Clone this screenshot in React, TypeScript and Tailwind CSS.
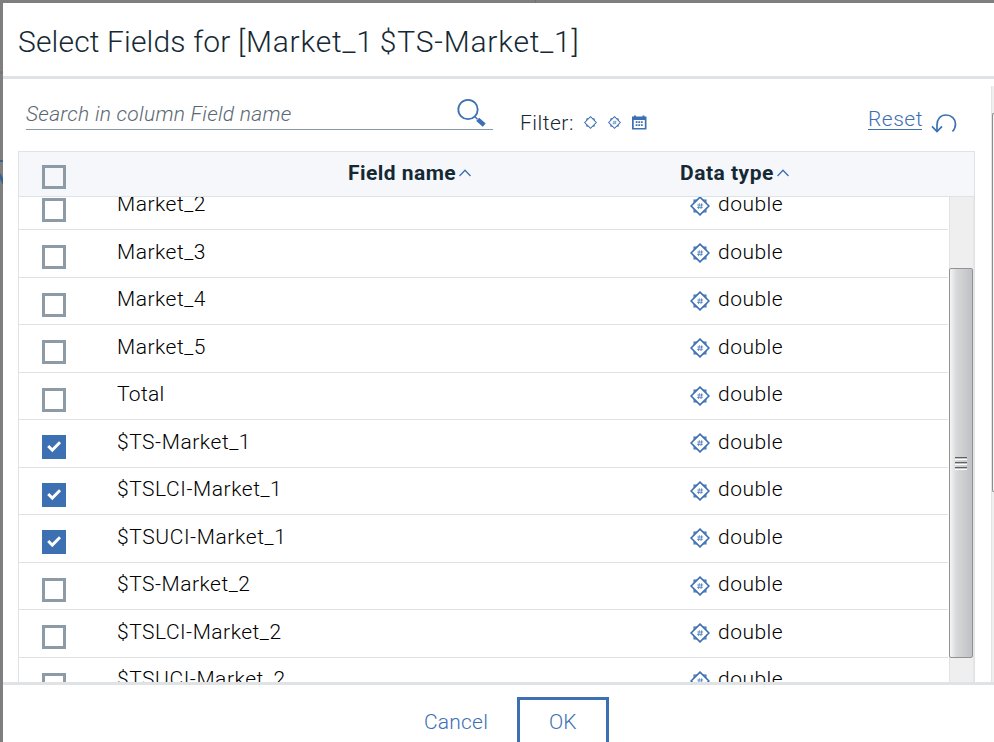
import React from "react";

type Row = { name: string; checked?: boolean; spacing: string };

const rows: Row[] = [
  { name: "Market_2", spacing: "tracking-[0.5px]" },
  { name: "Market_3", spacing: "tracking-[0.5px]" },
  { name: "Market_4", spacing: "tracking-[0.5px]" },
  { name: "Market_5", spacing: "tracking-[0.5px]" },
  { name: "Total", spacing: "tracking-[0.3px]" },
  { name: "$TS-Market_1", checked: true, spacing: "tracking-[0.55px]" },
  { name: "$TSLCI-Market_1", checked: true, spacing: "tracking-[0.55px]" },
  { name: "$TSUCI-Market_1", checked: true, spacing: "tracking-[0.6px]" },
  { name: "$TS-Market_2", spacing: "tracking-[0.5px]" },
  { name: "$TSLCI-Market_2", spacing: "tracking-[0.5px]" },
  { name: "$TSUCI-Market_2", spacing: "tracking-[0.55px]" },
];

function Checkbox({ checked = false }: { checked?: boolean }) {
  if (checked) {
    return (
      <span className="flex size-6 shrink-0 bg-[#3d70b2]">
        <svg width="24" height="24" viewBox="0 0 24 24" fill="none">
          <path d="M6.2 11L10.3 15.1L18 7.3" stroke="#fff" strokeWidth="2.9" />
        </svg>
      </span>
    );
  }
  return <span className="size-6 shrink-0 border-[3px] border-[#8c9ba5]" />;
}

function MeasureIcon({ size, hash = true }: { size: number; hash?: boolean }) {
  return (
    <svg width={size} height={size} viewBox="0 0 20 20" fill="none" stroke="#3d70b2" className="shrink-0">
      <path d="M4.1 4.1H15.9V15.9H4.1Z" strokeWidth="1.2" />
      <path d="M10 1.1L18.9 10L10 18.9L1.1 10Z" fill="#fff" strokeWidth="1.6" />
      {hash && <path d="M9.4 7.2L8.5 13M11.8 7.2L10.9 13M7.3 9H13.2M7 11.3H12.9" strokeWidth="0.75" />}
    </svg>
  );
}

function SortCaret() {
  return (
    <svg width="12" height="8" viewBox="0 0 12 8" fill="none" stroke="#3d70b2" strokeWidth="1.3">
      <path d="M0.5 7L6 1.2L11.5 7" />
    </svg>
  );
}

export default function App() {
  return (
    <div className="relative h-[742px] w-[994px] overflow-hidden bg-[#7f7f7f] pl-[3px] pt-[3px] font-['Roboto','Liberation_Sans',sans-serif] text-[21px] font-light leading-7 text-[#152934]">
      <div className="absolute left-0 top-[71px] h-[3px] w-[3px] bg-[#757575]" />
      <div className="absolute left-0 top-[160px] h-[2px] w-[3px] bg-[#38628f]" />
      <svg className="absolute left-0 top-[172px]" width="3" height="14" viewBox="0 0 3 14">
        <path d="M0 1L3 6V13L0 7Z" fill="#38628f" />
      </svg>
      <div className="absolute left-[535px] top-0 h-[3px] w-px bg-[#707070]" />

      <div className="flex h-[739px] flex-col bg-white">
        <header className="h-[76px] shrink-0 border-b-[3px] border-[#dfe3e6] pl-[15px] pt-[19px]">
          <h1 className="whitespace-nowrap text-[30px] font-light leading-10 tracking-[0.8px]">
            <span className="tracking-[0.15px]">Select Fields for </span>[Market_1{" "}
            <span className="-ml-[2px]">$TS-Market_1]</span>
          </h1>
        </header>

        <main className="flex h-[603px] shrink-0 overflow-hidden">
          <div className="w-[987px] shrink-0 pl-[15px]">
            <div className="flex h-[72px] items-start">
              <div className="ml-[8px] flex h-[51px] w-[467px] items-start justify-between border-b border-[#8897a2]">
                <span className="mt-[21px] whitespace-nowrap italic tracking-[0.28px] text-[#5a6872]">
                  Search in column Field name
                </span>
                <svg className="mr-[6.5px] mt-[19px]" width="31" height="30" viewBox="0 0 31 30" fill="none" stroke="#3d70b2">
                  <circle cx="12" cy="11.5" r="9.7" strokeWidth="1.8" />
                  <path d="M19 18.8L21.5 21.3" strokeWidth="1.5" />
                  <path d="M21.7 21.3L28.2 27.2" strokeWidth="4.4" />
                </svg>
              </div>
              <div className="ml-[27px] mt-[30px] flex w-[348px]">
                <span className="w-[64px] whitespace-nowrap tracking-[0.5px]">Filter:</span>
                <span className="mt-[6.5px] flex items-start gap-[11px]">
                  <MeasureIcon size={13} hash={false} />
                  <MeasureIcon size={13} />
                  <svg width="15" height="15" viewBox="0 0 15 15" className="-mt-[0.5px] -ml-[0.5px]">
                    <path d="M0 1.5H14.5V14.5H0Z" fill="#3d70b2" />
                    <path d="M2 0.5H4V2H2ZM10.5 0.5H12.5V2H10.5Z" fill="#3d70b2" />
                    <path d="M1.7 5H12.8V13H1.7Z" fill="#fff" />
                    <path d="M3.7 7.2H11M3.7 10.2H11" stroke="#3d70b2" strokeWidth="1.8" strokeDasharray="1.8 0.8" />
                  </svg>
                </span>
              </div>
              <a className="mt-[28px] h-[23px] w-[54px] whitespace-nowrap border-b border-[#3d70b2] leading-[24px] tracking-[0.5px] text-[#3d70b2]">
                Reset
              </a>
              <svg className="ml-[9px] mt-[34px]" width="26" height="21" viewBox="0 0 26 21" fill="none" stroke="#3d70b2" strokeWidth="1.7">
                <path d="M6 18.5V12C6 6 9.5 2 15 2S24.5 6 24.5 11C24.5 14 23.5 16.5 21.5 18.5" />
                <path d="M1 13.3L6 18.5L11 13.3" />
              </svg>
            </div>

            <div className="h-[531px] w-[957px] border border-b-0 border-[#dfe3e6]">
              <div className="flex h-[45px] items-start border-b border-[#dfe3e6] bg-[#f5f7fb] font-bold">
                <span className="ml-[23px] mt-[13px] flex">
                  <Checkbox />
                </span>
                <span className="ml-[282px] mt-[7px] flex w-[332px] items-start">
                  <span className="w-[111px] whitespace-nowrap tracking-[0.45px]">Field name</span>
                  <span className="mt-[5px] flex pt-[5px]"><SortCaret /></span>
                </span>
                <span className="mt-[7px] flex items-start">
                  <span className="w-[97px] whitespace-nowrap tracking-[0.5px]">Data type</span>
                  <span className="mt-[5px] flex pt-[5px]"><SortCaret /></span>
                </span>
              </div>

              <div className="flex h-[485px] overflow-hidden">
                <div className="-mt-[14px] w-[929px] shrink-0 text-black">
                  {rows.map((row) => (
                    <div
                      key={row.name}
                      className="flex h-[47px] items-start border-b border-[#dfe3e6] even:h-[48px] [&:nth-child(even)_.label]:mt-[8px]"
                    >
                      <span className="ml-[23px] mt-[15px] flex w-[75px]">
                        <Checkbox checked={row.checked} />
                      </span>
                      <span className={`label mt-[7px] w-[573px] whitespace-nowrap ${row.spacing}`}>{row.name}</span>
                      <span className="mt-[13px] flex w-[28px]">
                        <MeasureIcon size={20} />
                      </span>
                      <span className="label mt-[7px] whitespace-nowrap tracking-[0.5px]">double</span>
                    </div>
                  ))}
                </div>
                <div className="ml-px w-[25px] shrink-0 border-l border-r border-l-[#e3e3e3] border-r-[#e6e6e6] bg-[#efefef]">
                  <div className="-ml-px mt-[71px] flex h-[390px] w-[24px] flex-col items-center justify-center gap-[2px] rounded-[2px] border border-[#929294] bg-linear-to-r from-[#f5f5f5] via-[#d7d8da] via-30% to-[#c0c1c4]">
                    <span className="h-[3px] w-[12px] border-b border-t border-b-white border-t-[#5f6161] bg-[#c0c2c2]" />
                    <span className="h-[3px] w-[12px] border-b border-t border-b-white border-t-[#5f6161] bg-[#c0c2c2]" />
                    <span className="h-[3px] w-[12px] border-b border-t border-b-white border-t-[#5f6161] bg-[#c0c2c2]" />
                  </div>
                </div>
              </div>
            </div>
          </div>

          <div className="ml-px mt-[7px] w-[3px] shrink-0 border-l border-[#e3e3e3] bg-[#efefef]">
            <div className="mt-[27px] h-[379px] w-[3px] rounded-l-[2px] border-y border-l border-[#8e8e90] bg-[#f3f3f3]" />
          </div>
        </main>

        <footer className="flex h-[60px] shrink-0 items-start border-t-[3px] border-[#dfe3e6] text-[#3d70b2]">
          <button className="ml-[421px] mt-[23px] w-[64px] whitespace-nowrap text-left tracking-[0.2px]">Cancel</button>
          <button className="ml-[29px] mt-[12px] h-[60px] w-[92px] border-[3px] border-[#3d70b2] pb-[10px] pl-[29px] text-left">
            OK
          </button>
        </footer>
      </div>
    </div>
  );
}
